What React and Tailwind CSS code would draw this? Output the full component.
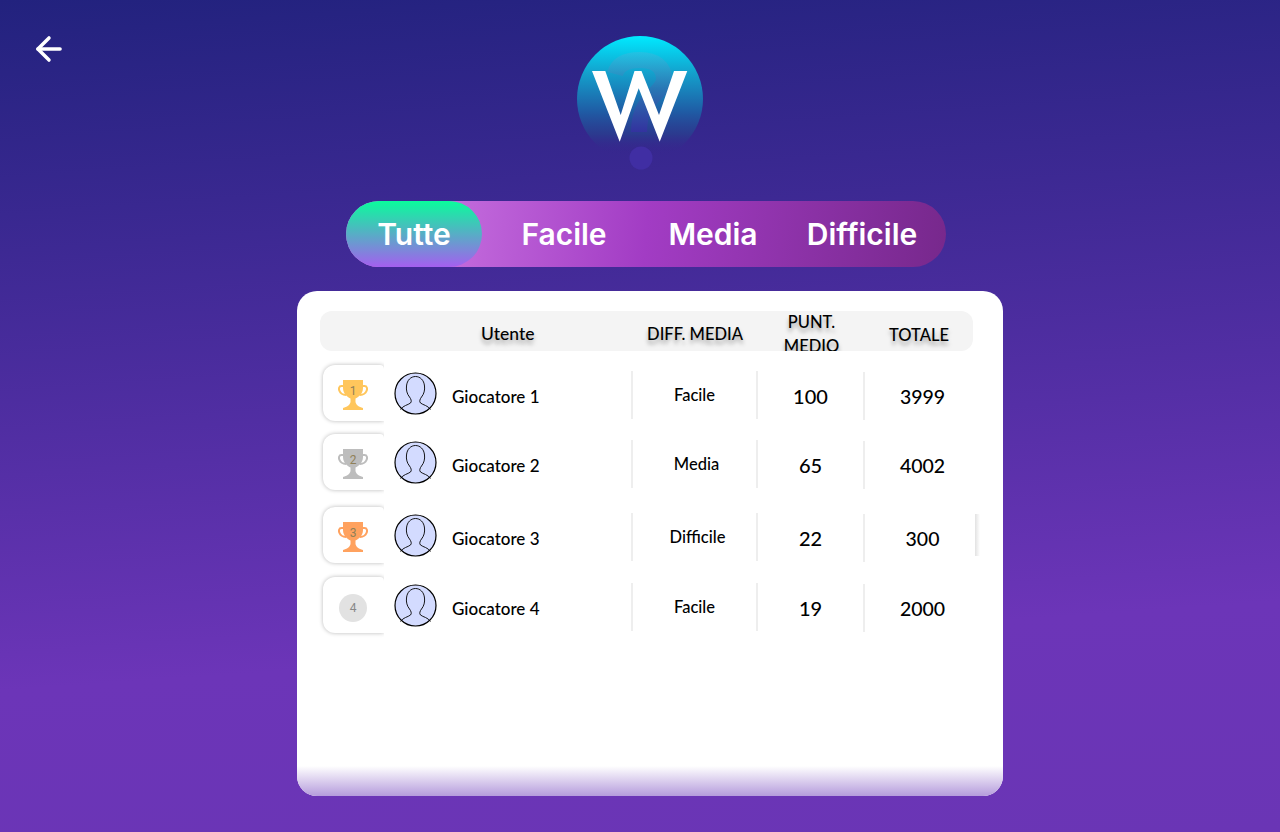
import React from 'react';
import { ArrowLeft } from 'lucide-react';

const players = [
  { rank: 1, name: 'Giocatore 1', diff: 'Facile', avg: '100', total: '3999', color: '#ffc65c', row: 'mt-[13px]', shift: '' },
  { rank: 2, name: 'Giocatore 2', diff: 'Media', avg: '65', total: '4002', color: '#bdbdbd', row: 'mt-[12px]', shift: 'pl-[4px]' },
  { rank: 3, name: 'Giocatore 3', diff: 'Difficile', avg: '22', total: '300', color: '#ffa25f', row: 'mt-[16px]', shift: 'pl-[6px]', edge: true },
  { rank: 4, name: 'Giocatore 4', diff: 'Facile', avg: '19', total: '2000', row: 'mt-[13px]', shift: '' },
];

const tabs = [
  { label: 'Tutte', width: 'w-[136px]', active: true },
  { label: 'Facile', width: 'w-[164px]' },
  { label: 'Media', width: 'w-[134px]' },
  { label: 'Difficile', width: 'w-[164px]' },
];

const Logo = () => (
  <svg width="126" height="134" viewBox="0 0 126 134" className="block">
    <defs>
      <linearGradient id="ball" x1="0" y1="0" x2="0" y2="126" gradientUnits="userSpaceOnUse">
        <stop offset="0" stopColor="#00eaff" />
        <stop offset="0.3" stopColor="#149fcb" />
        <stop offset="0.6" stopColor="#1f5ca5" />
        <stop offset="0.78" stopColor="#28408f" stopOpacity="0.75" />
        <stop offset="0.93" stopColor="#34258a" stopOpacity="0" />
      </linearGradient>
      <linearGradient id="mark" x1="0" y1="16" x2="0" y2="96" gradientUnits="userSpaceOnUse">
        <stop offset="0" stopColor="#45b9dc" stopOpacity="0.4" />
        <stop offset="0.45" stopColor="#2f72b2" stopOpacity="0.7" />
        <stop offset="1" stopColor="#33329f" />
      </linearGradient>
    </defs>
    <circle cx="63" cy="63" r="63" fill="url(#ball)" />
    <path d="M38 38C41 27 51 24 63 24C78 24 87 31 87 43C87 58 62 60 62 96" fill="none" stroke="url(#mark)" strokeWidth="16" />
    <circle cx="64" cy="122" r="11.500" fill="#402ea3" />
    <path d="M15 35H28.300L43.700 79L57.500 35H64.500L82 79L97 35H110.300L82.700 105.700L61.700 52.300L42.700 105.700Z" fill="#fff" />
  </svg>
);

const Trophy = ({ color, rank }) => (
  <div className="relative w-[30px] h-[30px] mt-[3px]">
    <svg width="30" height="30" viewBox="0 0 30 30" className="block">
      <path d="M6 6H3.500C0.800 6 0.500 9 1.500 11C2.500 13.500 5 14.800 8 15" fill="none" stroke={color} strokeWidth="2" />
      <path d="M24 6H26.500C29.200 6 29.500 9 28.500 11C27.500 13.500 25 14.800 22 15" fill="none" stroke={color} strokeWidth="2" />
      <path d="M5 0H25V8C25 14 20 17.500 17.500 18.500V22C18 25 21 27 25 28V30H5V28C9 27 12 25 12.500 22V18.500C10 17.500 5 14 5 8Z" fill={color} />
    </svg>
    <span className="absolute inset-x-0 top-[3px] text-center text-[12px] leading-[16px] text-[#8f8058] font-['Roboto',sans-serif]">{rank}</span>
  </div>
);

const Avatar = () => (
  <svg width="43" height="43" viewBox="0 0 43 43" className="block shrink-0">
    <circle cx="21.500" cy="21.500" r="20.500" fill="#d3dbff" stroke="#000" strokeWidth="1.200" />
    <path d="M6.500 37.500C9 33.500 14 33 16.500 31C18 29.500 17 27 15.500 25C13 22 12 18 12.500 14C13 8 17 4.500 21.500 4.500C26 4.500 30 8 30.500 14C31 18 30 22 27.500 25C26 27 25 29.500 26.500 31C29 33 34 33.500 36.500 37.500" fill="none" stroke="#000" strokeWidth="0.900" />
  </svg>
);

const Cell = ({ className = '', divider = 'mt-[7px]', children }) => (
  <div className={`${divider} h-[48px] border-l-2 border-[#eeeeee] flex items-center justify-center text-black ${className}`}>
    {children}
  </div>
);

const Row = ({ player }) => (
  <div className={`flex items-start h-[57px] ml-[26px] ${player.row}`}>
    <div className="w-[61px] h-[56px] mt-[1px] shrink-0 rounded-l-[12px] rounded-tr-[4px] shadow-[0_0_4px_rgba(0,0,0,0.28)] [clip-path:inset(-6px_0_-6px_-6px)] flex items-center justify-center pr-[1px]">
      {player.color ? (
        <Trophy color={player.color} rank={player.rank} />
      ) : (
        <div className="w-[28px] h-[28px] mt-[6px] rounded-full bg-[#e2e2e2] flex items-center justify-center text-[12px] text-[#888888] font-['Roboto',sans-serif]">
          {player.rank}
        </div>
      )}
    </div>
    <div className="ml-[10px] mt-[8px]"><Avatar /></div>
    <div className="ml-[15px] w-[179px] mt-[21px] text-[17px] leading-[24px] text-black font-medium">{player.name}</div>
    <Cell className={`w-[125px] text-[16.500px] font-medium ${player.shift}`}>{player.diff}</Cell>
    <Cell className="w-[107px] text-[20px] font-medium pt-[2px]">{player.avg}</Cell>
    <Cell className="w-[118px] text-[19.500px] font-medium pt-[1px] pr-[1px]" divider="mt-[8px]">{player.total}</Cell>
    {player.edge && <div className="w-[5px] h-[42px] mt-[8px] -ml-[6px] bg-[linear-gradient(90deg,#e2e2e2,#ffffff)]" />}
  </div>
);

const App = () => {
  return (
    <div className="relative h-[832px] overflow-hidden bg-[linear-gradient(176deg,#22227e_0%,#6c35b8_75%,#6a35b5_100%)] font-['Lato',sans-serif]">
      <button className="absolute left-[30px] top-[30px] text-white">
        <ArrowLeft size={38} strokeWidth={2.200} />
      </button>

      <div className="flex flex-col pt-[36px]">
        <div className="ml-[577px]"><Logo /></div>

        <div className="ml-[346px] mt-[31px] w-[600px] h-[66px] rounded-full flex items-center bg-[linear-gradient(95deg,#d584ea_0%,#a23cc4_50%,#77288c_100%)] font-['Inter',sans-serif] text-[30px] font-semibold text-white">
          {tabs.map((tab) => (
            <div
              key={tab.label}
              className={`${tab.width} h-[66px] flex items-center justify-center rounded-full ${tab.active ? 'bg-[linear-gradient(180deg,#0afc9c_0%,#a45fef_100%)]' : ''}`}
            >
              {tab.label}
            </div>
          ))}
        </div>

        <div className="ml-[297px] mt-[24px] w-[706px] h-[505px] bg-white rounded-[20px] overflow-hidden flex flex-col">
          <div className="mt-[20px] ml-[23px] w-[653px] h-[40px] shrink-0 rounded-[12px] bg-[#f4f4f4] overflow-hidden flex items-start text-[16.500px] leading-[24px] text-black font-medium [text-shadow:0_4px_4px_rgba(0,0,0,0.35)]">
            <div className="w-[312px] pl-[161px] mt-[11px] text-[17.500px]">Utente</div>
            <div className="w-[126px] text-center mt-[11px] whitespace-nowrap">DIFF. MEDIA</div>
            <div className="w-[107px] text-center -mt-[1px] px-[16px]">PUNT. MEDIO</div>
            <div className="w-[108px] text-center mt-[12px]">TOTALE</div>
          </div>

          {players.map((player) => (
            <Row key={player.rank} player={player} />
          ))}

          <div className="mt-auto h-[30px] shrink-0 bg-[linear-gradient(180deg,#ffffff_0%,#b59cdc_100%)]" />
        </div>
      </div>
    </div>
  );
};

export default App;
